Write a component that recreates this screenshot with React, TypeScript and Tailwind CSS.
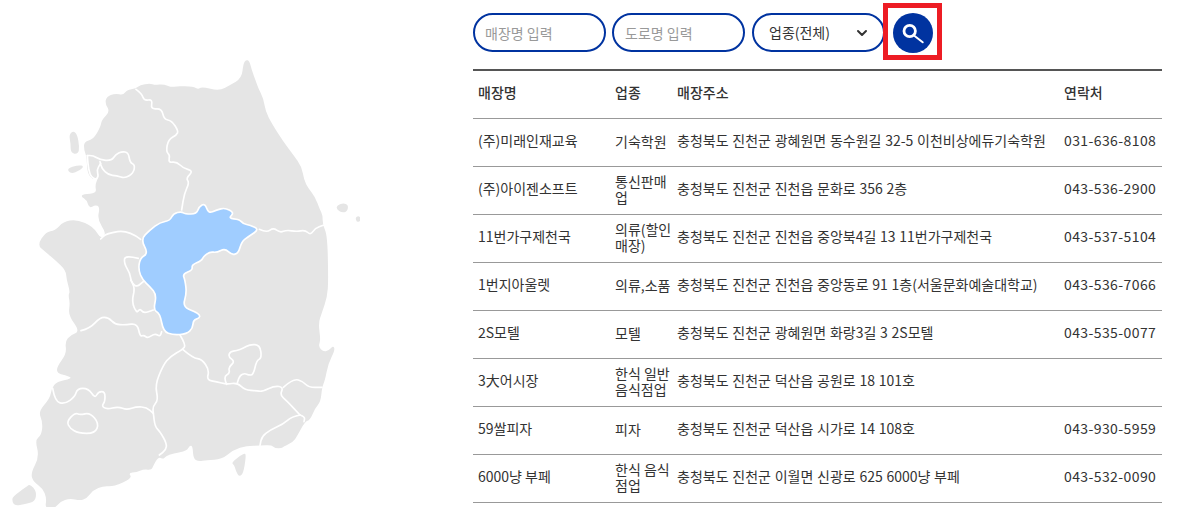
import { ChevronDown } from "lucide-react"

// map outlines traced at 3x page coordinates
const smooth = (raw: string, close = false) => {
  const p = raw.trim().split(/\s+/).map((s) => s.split(",").map(Number))
  if (close) {
    const mid = (a: number[], b: number[]) => [(a[0] + b[0]) / 2, (a[1] + b[1]) / 2]
    const start = mid(p[p.length - 1], p[0])
    let d = `M${start[0]} ${start[1]}`
    p.forEach((pt, i) => {
      const m = mid(pt, p[(i + 1) % p.length])
      d += `Q${pt[0]} ${pt[1]} ${m[0]} ${m[1]}`
    })
    return d + "Z"
  }
  let d = `M${p[0][0]} ${p[0][1]}`
  for (let i = 1; i < p.length - 1; i++) {
    const mx = (p[i][0] + p[i + 1][0]) / 2
    const my = (p[i][1] + p[i + 1][1]) / 2
    d += `Q${p[i][0]} ${p[i][1]} ${mx} ${my}`
  }
  const last = p[p.length - 1]
  return d + `L${last[0]} ${last[1]}`
}

const land =
  "730,190 738,180 748,182 755,210 770,250 775,265 790,295 797,335 815,370 850,425 880,465 905,500 912,540 925,565 945,590 960,630 968,645 968,675 982,705 985,840 982,890 965,940 955,970 962,1020 955,1040 970,1055 985,1052 1000,1037 1005,1050 985,1090 975,1140 966,1162 962,1205 945,1225 930,1260 915,1265 890,1310 880,1325 850,1340 845,1345 825,1345 815,1335 780,1337 740,1337 700,1350 665,1378 620,1380 595,1385 580,1375 578,1340 570,1335 560,1353 520,1360 497,1368 490,1378 475,1370 458,1400 455,1410 430,1408 410,1417 385,1418 397,1435 340,1460 310,1458 280,1470 260,1495 240,1502 210,1495 180,1505 165,1525 135,1525 140,1495 128,1465 100,1445 92,1420 118,1370 105,1320 125,1305 128,1265 115,1235 150,1195 155,1165 170,1145 220,1135 195,1125 172,1120 170,1102 200,1060 195,1025 212,1005 240,995 205,945 210,910 205,885 210,875 200,840 197,810 165,780 135,755 112,735 138,695 165,692 190,665 230,658 280,680 302,717 320,700 292,660 300,620 285,615 268,625 260,600 243,590 250,582 290,580 285,555 296,530 280,540 262,520 260,470 252,450 252,425 280,418 302,380 305,360 330,335 315,310 320,290 345,280 370,285 380,270 408,265 420,255 450,250 465,255 490,252 515,262 530,258 580,260 595,268 605,260 658,273 690,255 725,235"
const islands = [
  "207,405 220,392 232,405 238,440 235,462 212,460 212,430",
  "200,505 235,495 252,498 240,512 212,522",
  "1010,617 1030,609 1045,615 1042,635 1025,638 1010,628",
  "1066,652 1075,648 1082,652 1080,665 1070,666",
  "693,1388 735,1357 738,1370 730,1420 718,1430 708,1415 703,1395",
  "37,1490 80,1460 90,1452 110,1475 105,1505 75,1512 45,1518 37,1505",
]
const chungbuk =
  "422,718 450,690 480,667 510,662 520,640 545,635 555,642 590,642 597,620 615,610 625,640 650,630 675,623 703,638 685,655 718,658 730,672 750,675 778,688 745,710 725,725 715,760 695,765 675,745 650,758 630,755 610,770 605,782 575,795 578,810 548,822 555,840 560,880 548,920 585,935 600,945 598,955 580,960 578,985 560,1002 520,1005 490,995 480,940 460,930 470,885 450,860 428,840 415,810 420,775 445,760"
const lines = [
  "408,268 425,280 432,302 458,298 452,328 485,325 492,358 515,362 535,392 530,405 505,418 498,455 510,465 505,488 530,485 550,505 580,513 558,535 568,548 553,580 545,630",
  "422,718 385,690 320,700 302,717",
  "262,467 278,465 300,480 335,482 347,463 365,455 385,457 390,488 405,495 400,520 375,535 350,527 325,525 305,505 300,485",
  "262,467 265,520 285,540 296,530 290,510 302,490",
  "415,775 375,765 372,790 390,820 392,840 405,865 395,905 410,940 420,925 430,940 460,930",
  "392,840 405,865 430,845",
  "243,992 270,985 300,952 325,952 345,973 375,975 412,970 420,1010 432,1005 442,1015 465,1000 480,1010 485,995",
  "540,1005 558,1035 548,1048 510,1070 490,1095 465,1155 475,1200 458,1220 460,1240 465,1280 480,1295 500,1330 498,1350 478,1365",
  "158,1165 165,1205 195,1212 225,1190 232,1165 265,1165 285,1195 295,1175 315,1175 315,1205 305,1218 320,1228 355,1220 380,1230 410,1220 440,1222 460,1240",
  "548,1048 580,1075 605,1077 628,1110 620,1140 650,1145 680,1153 712,1148 735,1170 770,1172 785,1175 825,1157 850,1162 840,1185 860,1202 900,1245",
  "680,1153 670,1130 690,1120 685,1102 705,1085 685,1070 690,1055 710,1052 730,1045 750,1033 780,1035 785,1075 770,1080 760,1125 745,1125 735,1120 720,1125 712,1148",
  "850,1162 880,1135 910,1145 925,1162 966,1162",
  "900,1245 915,1250 912,1265",
  "900,1245 875,1250 850,1272 810,1290 785,1310 780,1337",
  "778,688 800,698 820,683 840,698 860,690 890,695 915,690 932,705 945,685 970,676",
]
const gwangju = "200,1265 225,1238 240,1245 270,1238 297,1270 285,1300 235,1300 210,1285"

function KoreaMap() {
  return (
    <svg viewBox="0 0 1080 1521" className="block w-[360px] h-[507px]">
      <path d={smooth(land, true)} fill="#e5e5e5" />
      {islands.map((d) => (
        <path key={d} d={smooth(d, true)} fill="#e5e5e5" />
      ))}
      <g fill="none" stroke="#fff" strokeWidth="5" strokeLinejoin="round" strokeLinecap="round">
        {lines.map((d) => (
          <path key={d} d={smooth(d)} />
        ))}
        <path d={smooth(gwangju, true)} />
        <path d={smooth(chungbuk, true)} fill="#a0cdff" />
      </g>
    </svg>
  )
}

const rows = [
  ["(주)미래인재교육", "기숙학원", "충청북도 진천군 광혜원면 동수원길 32-5 이천비상에듀기숙학원", "031-636-8108"],
  ["(주)아이젠소프트", "통신판매업", "충청북도 진천군 진천읍 문화로 356 2층", "043-536-2900"],
  ["11번가구제천국", "의류(할인매장)", "충청북도 진천군 진천읍 중앙북4길 13 11번가구제천국", "043-537-5104"],
  ["1번지아울렛", "의류,소품", "충청북도 진천군 진천읍 중앙동로 91 1층(서울문화예술대학교)", "043-536-7066"],
  ["2S모텔", "모텔", "충청북도 진천군 광혜원면 화랑3길 3 2S모텔", "043-535-0077"],
  ["3大어시장", "한식 일반 음식점업", "충청북도 진천군 덕산읍 공원로 18 101호", ""],
  ["59쌀피자", "피자", "충청북도 진천군 덕산읍 시가로 14 108호", "043-930-5959"],
  ["6000냥 부페", "한식 음식 점업", "충청북도 진천군 이월면 신광로 625 6000냥 부페", "043-532-0090"],
  ["7번가피자", "피자 전문점", "충청북도 진천군 진천읍 중앙로 10", "043-533-7770"],
]

export default function App() {
  return (
    <div className="flex w-[1198px] h-[530px] bg-white overflow-hidden text-sm text-[#333] font-['Noto_Sans_CJK_KR',sans-serif]">
      <div className="w-[473px] shrink-0">
        <KoreaMap />
      </div>
      <div className="w-[689px] shrink-0">
        <div className="flex items-start h-[69px] pt-[3px]">
          <input
            placeholder="매장명 입력"
            className="w-[133px] h-[39px] mt-[10px] rounded-full border-2 border-[#0033a0] px-[10px] text-sm outline-none placeholder:text-[#999]"
          />
          <input
            placeholder="도로명 입력"
            className="w-[133px] h-[39px] mt-[10px] ml-[6px] rounded-full border-2 border-[#0033a0] px-[11px] text-sm outline-none placeholder:text-[#999]"
          />
          <div className="flex items-center justify-between w-[133px] h-[39px] mt-[10px] ml-[7px] pl-[15px] pr-[13px] rounded-full border-2 border-[#0033a0] text-sm">
            <span className="pb-[2px]">업종(전체)</span>
            <ChevronDown className="w-[16px] h-[16px]" strokeWidth={3} />
          </div>
          <div className="flex items-start justify-center w-[59px] h-[57px] -ml-[2px] pt-[5px] border-[5px] border-[#ed1c24]">
            <button className="flex items-center justify-center w-10 h-10 rounded-full bg-[#0033a0]">
              <svg viewBox="0 0 24 24" className="w-[24px] h-[24px]" fill="none" stroke="#fff">
                <circle cx="8.7" cy="10" r="5.7" strokeWidth="2.8" />
                <path d="M13 14.5L21.7 21.3" strokeWidth="2" strokeLinecap="round" />
              </svg>
            </button>
          </div>
        </div>
        <div className="h-[438px] overflow-hidden border-t-2 border-[#555]">
          <table className="w-full table-fixed border-collapse leading-[16px]">
            <colgroup>
              <col className="w-[138px]" />
              <col className="w-[62px]" />
              <col className="w-[387px]" />
              <col />
            </colgroup>
            <thead>
              <tr className="h-[47px] border-b border-[#999] text-left">
                <th className="px-[5px] pb-[4px] font-medium">매장명</th>
                <th className="pl-[4px] pb-[4px] font-medium">업종</th>
                <th className="pl-[4px] pb-[4px] font-medium">매장주소</th>
                <th className="pl-[4px] pb-[4px] font-medium">연락처</th>
              </tr>
            </thead>
            <tbody>
              {rows.map((r) => (
                <tr key={r[0]} className="h-[48px] border-b border-[#999]">
                  <td className="px-[5px] pb-[4px]">{r[0]}</td>
                  <td className="pl-[4px] pb-[2px] break-all">{r[1]}</td>
                  <td className="pl-[4px] pb-[4px] whitespace-nowrap [word-spacing:0.6px]">{r[2]}</td>
                  <td className="pl-[4px] pb-[4px] whitespace-nowrap tracking-[0.4px]">{r[3]}</td>
                </tr>
              ))}
            </tbody>
          </table>
        </div>
      </div>
    </div>
  )
}
